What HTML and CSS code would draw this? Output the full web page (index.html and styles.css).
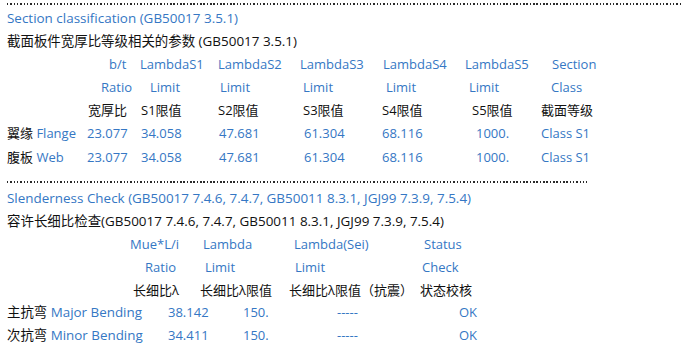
FILE: index.html
```html
<!DOCTYPE html>
<html lang="zh-CN">
<head>
<meta charset="utf-8">
<title>Section classification</title>
<link rel="stylesheet" href="styles.css">
</head>
<body>
<div class="report">
  <div class="dots long"></div>
  <div class="sec1">
    <div class="line blue">Section classification (GB50017 3.5.1)</div>
    <div class="line">截面板件宽厚比等级相关的参数 (GB50017 3.5.1)</div>
    <div class="row t1 h1 blue"><span></span><span>b/t</span><span>LambdaS1</span><span>LambdaS2</span><span>LambdaS3</span><span>LambdaS4</span><span>LambdaS5</span><span>Section</span></div>
    <div class="row t1 h2 blue"><span></span><span>Ratio</span><span>Limit</span><span>Limit</span><span>Limit</span><span>Limit</span><span>Limit</span><span>Class</span></div>
    <div class="row t1 h3"><span></span><span>宽厚比</span><span>S1限值</span><span>S2限值</span><span>S3限值</span><span>S4限值</span><span>S5限值</span><span>截面等级</span></div>
    <div class="row t1 d blue"><span><b class="k">翼缘</b> Flange</span><span>23.077</span><span>34.058</span><span>47.681</span><span>61.304</span><span>68.116</span><span>1000.</span><span>Class S1</span></div>
    <div class="row t1 d blue"><span><b class="k">腹板</b> Web</span><span>23.077</span><span>34.058</span><span>47.681</span><span>61.304</span><span>68.116</span><span>1000.</span><span>Class S1</span></div>
  </div>
  <div class="dots short"></div>
  <div class="sec2">
    <div class="line blue">Slenderness Check (GB50017 7.4.6, 7.4.7, GB50011 8.3.1, JGJ99 7.3.9, 7.5.4)</div>
    <div class="line">容许长细比检查(GB50017 7.4.6, 7.4.7, GB50011 8.3.1, JGJ99 7.3.9, 7.5.4)</div>
    <div class="row t2 h1 blue"><span></span><span>Mue*L/i</span><span>Lambda</span><span>Lambda(Sei)</span><span>Status</span></div>
    <div class="row t2 h2 blue"><span></span><span>Ratio</span><span>Limit</span><span>Limit</span><span>Check</span></div>
    <div class="row t2 h3"><span></span><span>长细比λ</span><span>长细比λ限值</span><span>长细比λ限值（抗震）</span><span>状态校核</span></div>
    <div class="row t2 d blue"><span><b class="k">主抗弯</b> Major Bending</span><span>38.142</span><span>150.</span><span>-----</span><span>OK</span></div>
    <div class="row t2 d blue"><span><b class="k">次抗弯</b> Minor Bending</span><span>34.411</span><span>150.</span><span>-----</span><span>OK</span></div>
  </div>
</div>
</body>
</html>
```
FILE: styles.css
```css
html, body {
  margin: 0;
  padding: 0;
  background: #ffffff;
}
body {
  font-family: "Open Sans", "Noto Sans CJK SC", sans-serif;
  font-size: 13px;
  color: #111111;
}
.report {
  padding-left: 7px;
}
.dots {
  height: 2px;
  background-image: repeating-linear-gradient(to right, #2a2a2a 0 1.4px, transparent 1.4px 3.33px);
}
.dots.long {
  width: 675px;
  margin-top: 3px;
  margin-bottom: 1.5px;
}
.dots.short {
  width: 580px;
  margin-top: 12px;
  margin-bottom: 4.5px;
}
.sec1 .line, .sec1 .row {
  height: 23.2px;
  line-height: 23.2px;
}
.sec2 .line, .sec2 .row {
  height: 22.8px;
  line-height: 22.8px;
}
.line {
  white-space: nowrap;
  font-size: 13.45px;
}
.blue {
  color: #3577c4;
}
.k {
  font-weight: normal;
  color: #111111;
}
.row {
  display: grid;
  white-space: nowrap;
}
.row span {
  justify-self: start;
}
.t2.d span:first-child {
  font-size: 13.4px;
}
.t1 {
  grid-template-columns: 78px 55px 78px 82px 82px 83px 76px auto;
}
.t2 {
  grid-template-columns: 123px 70px 89px 131px auto;
}

/* table 1 offsets */
.t1.h1 span:nth-child(2) { padding-left: 24px; }
.t1.h1 span:nth-child(6) { padding-left: 1px; }
.t1.h1 span:nth-child(8) { padding-left: 11px; }

.t1.h2 span:nth-child(2) { padding-left: 16px; }
.t1.h2 span:nth-child(3) { padding-left: 10px; }
.t1.h2 span:nth-child(4) { padding-left: 2px; }
.t1.h2 span:nth-child(5) { padding-left: 3px; }
.t1.h2 span:nth-child(6) { padding-left: 4px; }
.t1.h2 span:nth-child(7) { padding-left: 4px; }
.t1.h2 span:nth-child(8) { padding-left: 10px; }

.t1.h3 span:nth-child(2) { padding-left: 3px; }
.t1.h3 span:nth-child(3) { padding-left: 1px; }
.t1.h3 span:nth-child(5) { padding-left: 3px; }
.t1.h3 span:nth-child(7) { padding-left: 7px; }

.t1.d span:nth-child(2) { padding-left: 2px; }
.t1.d span:nth-child(3) { padding-left: 1px; }
.t1.d span:nth-child(4) { padding-left: 1px; }
.t1.d span:nth-child(5) { padding-left: 4px; }
.t1.d span:nth-child(7) { padding-left: 11px; }

/* table 2 offsets */
.t2.h1 span:nth-child(3) { padding-left: 3px; }
.t2.h1 span:nth-child(4) { padding-left: 5px; }
.t2.h1 span:nth-child(5) { padding-left: 4px; }

.t2.h2 span:nth-child(2) { padding-left: 15px; }
.t2.h2 span:nth-child(3) { padding-left: 5px; }
.t2.h2 span:nth-child(4) { padding-left: 6px; }
.t2.h2 span:nth-child(5) { padding-left: 2px; }

.t2.h3 span:nth-child(2) { padding-left: 3px; }

.t2.d span:nth-child(2) { padding-left: 38px; }
.t2.d span:nth-child(3) { padding-left: 43px; }
.t2.d span:nth-child(4) { padding-left: 48px; }
.t2.d span:nth-child(5) { padding-left: 39px; }
```
